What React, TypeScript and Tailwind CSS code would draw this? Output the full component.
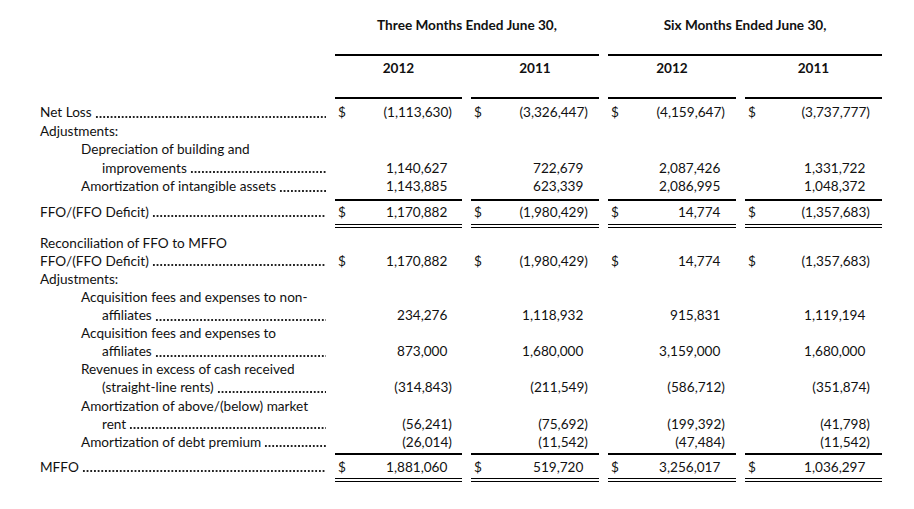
type Row = {
  label: string;
  indent?: 0 | 1 | 2;
  leader?: boolean;
  values?: string[];
  dollar?: boolean;
  cls: string;
  valueCls?: string;
};

const rows: Row[] = [
  { label: 'Net Loss', leader: true, dollar: true, values: ['(1,113,630)', '(3,326,447)', '(4,159,647)', '(3,737,777)'], cls: 'pt-[4px] leading-[18.5px]' },
  { label: 'Adjustments:', cls: 'leading-[18.5px]' },
  { label: 'Depreciation of building and', indent: 1, cls: 'leading-[18.5px]' },
  { label: 'improvements', indent: 2, leader: true, values: ['1,140,627', '722,679', '2,087,426', '1,331,722'], cls: 'leading-[18.5px]' },
  { label: 'Amortization of intangible assets', indent: 1, leader: true, values: ['1,143,885', '623,339', '2,086,995', '1,048,372'], cls: 'leading-[18.5px]', valueCls: 'pb-[3px] border-b-2 border-black' },
  { label: 'FFO/(FFO Deficit)', leader: true, dollar: true, values: ['1,170,882', '(1,980,429)', '14,774', '(1,357,683)'], cls: 'pt-[2px] leading-[18.2px]', valueCls: 'pb-[3px] border-b-4 border-double border-black' },
  { label: 'Reconciliation of FFO to MFFO', cls: 'pt-[6px] leading-[18.1px]' },
  { label: 'FFO/(FFO Deficit)', leader: true, dollar: true, values: ['1,170,882', '(1,980,429)', '14,774', '(1,357,683)'], cls: 'leading-[18.1px]' },
  { label: 'Adjustments:', cls: 'leading-[18.1px]' },
  { label: 'Acquisition fees and expenses to non-', indent: 1, cls: 'leading-[18.1px]' },
  { label: 'affiliates', indent: 2, leader: true, values: ['234,276', '1,118,932', '915,831', '1,119,194'], cls: 'leading-[18.1px]' },
  { label: 'Acquisition fees and expenses to', indent: 1, cls: 'leading-[18.1px]' },
  { label: 'affiliates', indent: 2, leader: true, values: ['873,000', '1,680,000', '3,159,000', '1,680,000'], cls: 'leading-[18.1px]' },
  { label: 'Revenues in excess of cash received', indent: 1, cls: 'leading-[18.1px]' },
  { label: '(straight-line rents)', indent: 2, leader: true, values: ['(314,843)', '(211,549)', '(586,712)', '(351,874)'], cls: 'leading-[18.1px]' },
  { label: 'Amortization of above/(below) market', indent: 1, cls: 'leading-[18.1px]' },
  { label: 'rent', indent: 2, leader: true, values: ['(56,241)', '(75,692)', '(199,392)', '(41,798)'], cls: 'leading-[18.1px]' },
  { label: 'Amortization of debt premium', indent: 1, leader: true, values: ['(26,014)', '(11,542)', '(47,484)', '(11,542)'], cls: 'leading-[18.1px]', valueCls: 'pb-[2px] border-b-2 border-black' },
  { label: 'MFFO', leader: true, dollar: true, values: ['1,881,060', '519,720', '3,256,017', '1,036,297'], cls: 'pt-[3px] leading-[18.1px]', valueCls: 'pb-[2px] border-b-4 border-double border-black' },
];

const indents = ['pl-[40px]', 'pl-[81px]', 'pl-[102px]'];
const valuePad = ['pr-[10px]', 'pr-[11px]', 'pr-[11px]', 'pr-[12px]'];

// dotted leader drawn as a repeating dot along the baseline
function Leader() {
  return (
    <span className="ml-[3px] flex-1 self-stretch min-w-0 bg-[radial-gradient(circle,#222_0.75px,transparent_1px)] bg-[length:3.7px_2px] bg-[position:0_12.5px] bg-repeat-x" />
  );
}

function Value({ v }: { v: string }) {
  const neg = v.startsWith('(');
  return <span className={neg ? '' : 'pr-[4.6px]'}>{v}</span>;
}

export default function App() {
  return (
    <div className="w-[914px] h-[509px] bg-white text-[#111] text-[13.6px] leading-[18.2px] font-['Lato','Open_Sans',sans-serif]">
      <div className="grid grid-cols-[326px_127px_128px_128px_137px] gap-x-[9px] items-stretch">
        {/* header */}
        <div />
        <div className="col-span-2 h-[56px] pt-[16px] border-b-2 border-black text-center font-bold">Three Months Ended June 30,</div>
        <div className="col-span-2 h-[56px] pt-[16px] border-b-2 border-black text-center font-bold">Six Months Ended June 30,</div>
        <div />
        {['2012', '2011', '2012', '2011'].map((y, i) => (
          <div key={i} className="h-[43px] pt-[3px] border-b-2 border-black text-center font-bold">
            {y}
          </div>
        ))}

        {rows.map((r, idx) => (
          <div key={idx} className="contents">
            <div className={`${r.cls} ${indents[r.indent ?? 0]} flex items-start whitespace-nowrap min-w-0`}>
              <span>{r.label}</span>
              {r.leader && <Leader />}
            </div>
            {[0, 1, 2, 3].map((c) => (
              <div key={c} className={`${r.cls} ${r.valueCls ?? ''} ${valuePad[c]} pl-[3px] flex items-start justify-between whitespace-nowrap`}>
                <span>{r.dollar && r.values ? '$' : ''}</span>
                {r.values && <Value v={r.values[c]} />}
              </div>
            ))}
          </div>
        ))}
      </div>
    </div>
  );
}
